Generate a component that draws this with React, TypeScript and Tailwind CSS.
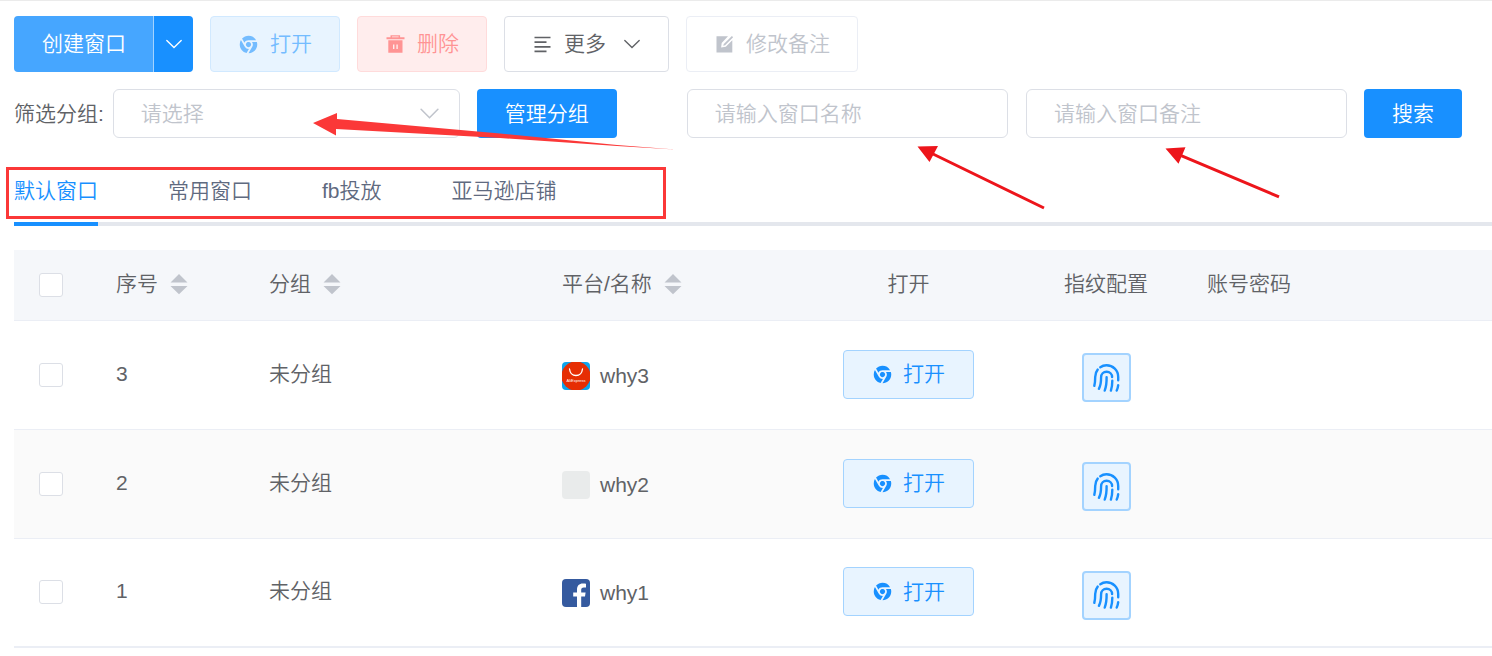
import React from "react";

function ChromeIcon() {
  return (
    <svg viewBox="0 0 1024 1024" className="h-[21px] w-[21px] shrink-0" fill="currentColor" aria-hidden="true">
      <path d="M938.67 512.01c0-44.59-6.82-87.6-19.54-128H682.67a212.372 212.372 0 0 1 42.67 128c.06 38.71-10.45 76.7-30.42 109.87l-182.91 316.8c235.65-.01 426.66-191.02 426.66-426.67z" />
      <path d="M576.79 401.63a127.92 127.92 0 0 0-63.56-17.6c-22.36-.22-44.39 5.43-63.89 16.38s-35.79 26.82-47.25 46.02a128.005 128.005 0 0 0-2.16 127.44l1.24 2.13a127.906 127.906 0 0 0 46.36 46.61 127.907 127.907 0 0 0 63.38 17.44c22.29.2 44.24-5.43 63.68-16.33a127.94 127.94 0 0 0 47.16-45.79v-.01l1.11-1.92a127.984 127.984 0 0 0 .29-127.46 127.957 127.957 0 0 0-46.36-46.91" />
      <path d="M394.45 333.96A213.336 213.336 0 0 1 512 298.67h369.58A426.503 426.503 0 0 0 512 85.34a425.598 425.598 0 0 0-171.74 35.98 425.644 425.644 0 0 0-142.62 102.22l118.14 204.63a213.397 213.397 0 0 1 78.67-94.21m20.31 367.99a213.284 213.284 0 0 1-89.54-86.81L142.48 298.6c-36.35 62.81-57.13 135.68-57.13 213.42 0 203.81 142.93 374.22 333.95 416.55h.04l118.19-204.71a213.315 213.315 0 0 1-122.77-21.91z" />
    </svg>
  );
}

function TrashIcon() {
  return (
    <svg viewBox="0 0 21 21" className="h-[21px] w-[21px] shrink-0" fill="currentColor" aria-hidden="true">
      <path fillRule="evenodd" d="M5.5 1.2h9.600v2h4.400v2H1.500v-2h4zM7 2.600v.6h6.600v-.6z" />
      <path fillRule="evenodd" d="M3.300 6.200h14.200v12.500H3.300zM8 10.500v4.500h1.400v-4.500zm3.400 0v4.500h1.400v-4.500z" />
    </svg>
  );
}

function LinesIcon() {
  return (
    <svg viewBox="0 0 21 21" className="h-[21px] w-[21px] shrink-0" stroke="currentColor" strokeWidth="1.7" aria-hidden="true">
      <path d="M2.5 3.5h16M2.5 8.2h12M2.5 12.8h16M2.5 17.4h12" />
    </svg>
  );
}

function EditIcon() {
  return (
    <svg viewBox="0 0 21 21" className="h-[21px] w-[21px] shrink-0" aria-hidden="true">
      <path fill="currentColor" d="M2.5 2.3H14l-6.3 6.6-.6 4.6 4.7-.7 6.5-6.5v12.2H2.5z" />
      <path fill="currentColor" d="m17.9 2 1.2 1.2-8 8-1.9.6.6-1.8z" />
    </svg>
  );
}

function Chevron({ className }: { className: string }) {
  return (
    <svg viewBox="0 0 20 20" className={className} fill="none" stroke="currentColor" strokeLinecap="round" strokeWidth="1.5" aria-hidden="true">
      <path d="m2 6 8 8 8-8" />
    </svg>
  );
}

function FingerprintIcon() {
  return (
    <svg viewBox="9.5 9.5 30 30" className="h-[30px] w-[30px]" fill="none" stroke="currentColor" strokeWidth="2.4" strokeLinecap="round" aria-hidden="true">
      <path d="M12.8 32.4c.8-3.2.9-5.6.9-8.9 0-3 .8-5.4 2.5-7.4" />
      <path d="M18.8 13.8c1.9-1.4 4-2 6.2-2 6.500 0 11.700 5 11.700 11.600v3.400" />
      <path d="M36.7 31.6c-.2 2-.8 3.900-1.500 5.500" />
      <path d="M17.4 35.300c1.700-3 2.200-5.600 2.200-11.500 0-3.200 2.300-5.500 5.500-5.500 3.200 0 5.500 2.300 5.500 5.300" />
      <path d="M30.800 27.200c0 4-.4 6.900-1.400 9.900" />
      <path d="M25.100 23.800c.1 5.900-.4 9.500-1.900 13.300" />
    </svg>
  );
}

function SortIcon() {
  return (
    <svg viewBox="0 0 18 22" className="h-[22px] w-[18px] text-[#c0c4cc]" fill="currentColor" aria-hidden="true">
      <path d="m9 1 8.500 8.500H.5zM.5 13h17L9 21.300z" />
    </svg>
  );
}

function AliExpressLogo() {
  return (
    <svg viewBox="0 0 28 28" className="h-7 w-7 rounded" aria-hidden="true">
      <path fill="#0ea5ec" d="M0 0h28v28H0z" />
      <circle cx="14" cy="14" r="14.600" fill="#e62e04" />
      <path d="M7.500 7c.5 4 3.100 6.500 6.500 6.500s6-2.500 6.500-6.500" fill="none" stroke="#fff" strokeWidth="1.300" strokeLinecap="round" />
      <text x="14" y="20" fill="#fff" fontSize="4" textAnchor="middle" fontFamily="Liberation Sans, sans-serif">AliExpress</text>
    </svg>
  );
}

function BlankLogo() {
  return <span className="h-7 w-7 rounded bg-[#e9ebeb]" />;
}

function FacebookLogo() {
  return (
    <svg viewBox="0 0 28 28" className="h-7 w-7 rounded" aria-hidden="true">
      <path fill="#355a9f" d="M0 0h28v28H0z" />
      <path fill="#fff" d="M15 28V17.500h-3.800v-4H15v-3c0-3.800 2.300-6 5.800-6 1.300 0 2.400.1 3.200.3v3.600h-2.200c-2 0-2.600 1-2.600 2.500v2.600h4.400l-.6 4h-3.800V28z" />
    </svg>
  );
}

const rows = [
  { id: 3, group: "未分组", name: "why3", Logo: AliExpressLogo },
  { id: 2, group: "未分组", name: "why2", Logo: BlankLogo },
  { id: 1, group: "未分组", name: "why1", Logo: FacebookLogo },
];

const tabs = ["默认窗口", "常用窗口", "fb投放", "亚马逊店铺"];

const box = "h-6 w-6 appearance-none rounded-[3px] border border-[#dcdfe6] bg-white align-middle checked:bg-[#1890ff]";
const field = "h-[49px] min-w-0 rounded-md border border-[#dcdfe6] bg-white pl-[27px] placeholder:text-[#c0c4cc] outline-none";
const primary = "h-[49px] shrink-0 rounded bg-[#1890ff] px-7 text-white";
const tool = "flex h-14 items-center gap-[11px] rounded border px-[27px]";

function Annotations() {
  return (
    <>
      <div className="pointer-events-none absolute top-[166px] left-[6px] h-[52px] w-[660px] border-3 border-[#fb3838]" />
      <svg className="pointer-events-none absolute top-[104px] left-[305px]" width="375" height="50" viewBox="305 105 375 50" aria-hidden="true">
        <path fill="#fb3838" d="m313 123 24-10v6l163 14.500 117 11.500 58 4.500-58-3.500-117-8-164-9v6.500z" />
      </svg>
      <svg className="pointer-events-none absolute top-[139px] left-[910px]" width="380" height="75" viewBox="910 140 380 75" aria-hidden="true">
        <path fill="#ed151b" d="m917.500 146.500 20.500-.5-8.500 16zM1165.500 148.500l20-1.300-7 16.500z" />
        <path stroke="#ed151b" strokeWidth="3" d="m932 153.500 112 54.500M1180 155.200l99 41.600" />
      </svg>
    </>
  );
}

export default function App() {
  return (
    <main className="relative min-h-screen overflow-hidden border-t border-[#ebebeb] bg-white pt-[15px] pl-[14px] font-['Liberation_Sans','Noto_Sans_CJK_SC',sans-serif] text-[21px] leading-7 font-[350] text-[#606266]">
      <div className="flex gap-[17px]">
        <div className="flex h-14 overflow-hidden rounded text-white">
          <button className="bg-[#46a6ff] pr-[27px] pl-7">创建窗口</button>
          <button aria-label="展开创建选项" className="flex w-10 items-center justify-center border-l border-[#a3d3ff] bg-[#1890ff]">
            <Chevron className="h-[18px] w-[18px]" />
          </button>
        </div>
        <button className={`${tool} border-[#d1e9ff] bg-[#e8f4ff] text-[#74bcff]`}><ChromeIcon />打开</button>
        <button className={`${tool} border-[#ffdbdb] bg-[#ffeded] text-[#ff9494]`}><TrashIcon />删除</button>
        <button className={`${tool} border-[#dcdfe6]`}>
          <LinesIcon />更多<Chevron className="ml-[6px] h-[18px] w-[18px]" />
        </button>
        <button className={`${tool} border-[#ebeef5] text-[#c0c4cc]`}><EditIcon />修改备注</button>
      </div>

      <div className="mt-[17px] flex items-center pr-[30px]">
        <label htmlFor="group" className="shrink-0">筛选分组:</label>
        <div className="relative ml-[9px] w-[347px]">
          <select id="group" className={`${field} w-full appearance-none text-[#c0c4cc]`}>
            <option>请选择</option>
          </select>
          <Chevron className="pointer-events-none absolute top-[14px] right-5 h-[21px] w-[21px] text-[#c0c4cc]" />
        </div>
        <button className={`${primary} ml-[17px]`}>管理分组</button>
        <input aria-label="窗口名称" placeholder="请输入窗口名称" className={`${field} ml-[70px] flex-1`} />
        <input aria-label="窗口备注" placeholder="请输入窗口备注" className={`${field} ml-[18px] flex-1`} />
        <button className={`${primary} ml-[17px]`}>搜索</button>
      </div>

      <nav className="mt-[31px] flex gap-[70px] bg-[linear-gradient(#e4e7ed,#e4e7ed)] bg-[length:100%_4px] bg-bottom bg-no-repeat">
        {tabs.map((tab, i) => (
          <button
            key={tab}
            className={`h-[57px] border-b-4 pb-[9px] ${i === 0 ? "border-[#1890ff] text-[#1890ff]" : "border-transparent text-[#5f6a80]"}`}
          >
            {tab}
          </button>
        ))}
      </nav>

      <table className="mt-6 w-full table-fixed border-separate border-spacing-0 text-left">
        <colgroup>
          <col className="w-[85px]" />
          <col className="w-[153px]" />
          <col className="w-[293px]" />
          <col className="w-[250px]" />
          <col className="w-[227px]" />
          <col className="w-[168px]" />
          <col />
        </colgroup>
        <thead className="bg-[#f5f7fa]">
          <tr className="h-[71px] *:border-b *:border-[#ebeef5] *:pb-[3px] *:font-[350]">
            <th className="pl-[25px]"><input type="checkbox" aria-label="全选" className={box} /></th>
            {["序号", "分组", "平台/名称"].map((title) => (
              <th key={title} className="pl-[17px]">
                <div className="flex items-center gap-3">{title}<SortIcon /></div>
              </th>
            ))}
            <th className="text-center">打开</th>
            <th className="text-center">指纹配置</th>
            <th className="pl-[17px]">账号密码</th>
          </tr>
        </thead>
        <tbody>
          {rows.map(({ id, group, name, Logo }) => (
            <tr key={id} className="h-[109px] *:border-b *:border-[#ebeef5] even:bg-[#fafafa] last:*:border-b-2">
              <td className="pb-[3px] pl-[25px]"><input type="checkbox" aria-label={`选择 ${name}`} className={box} /></td>
              <td className="pb-[3px] pl-[17px]">{id}</td>
              <td className="pb-[3px] pl-[17px]">{group}</td>
              <td className="pt-[1px] pl-[17px]">
                <div className="flex items-center gap-[10px]"><Logo />{name}</div>
              </td>
              <td className="pb-[2px]">
                <button className="mx-auto flex h-[49px] items-center gap-[10px] rounded border border-[#a3d3ff] bg-[#e8f4ff] px-7 text-[#1890ff]">
                  <ChromeIcon />打开
                </button>
              </td>
              <td className="pt-[5px]">
                <button aria-label="指纹配置" className="mx-auto flex h-[49px] w-[49px] items-center justify-center rounded border-2 border-[#a3d3ff] bg-[#e8f4ff] text-[#1890ff]">
                  <FingerprintIcon />
                </button>
              </td>
              <td />
            </tr>
          ))}
        </tbody>
      </table>
      <Annotations />
    </main>
  );
}
